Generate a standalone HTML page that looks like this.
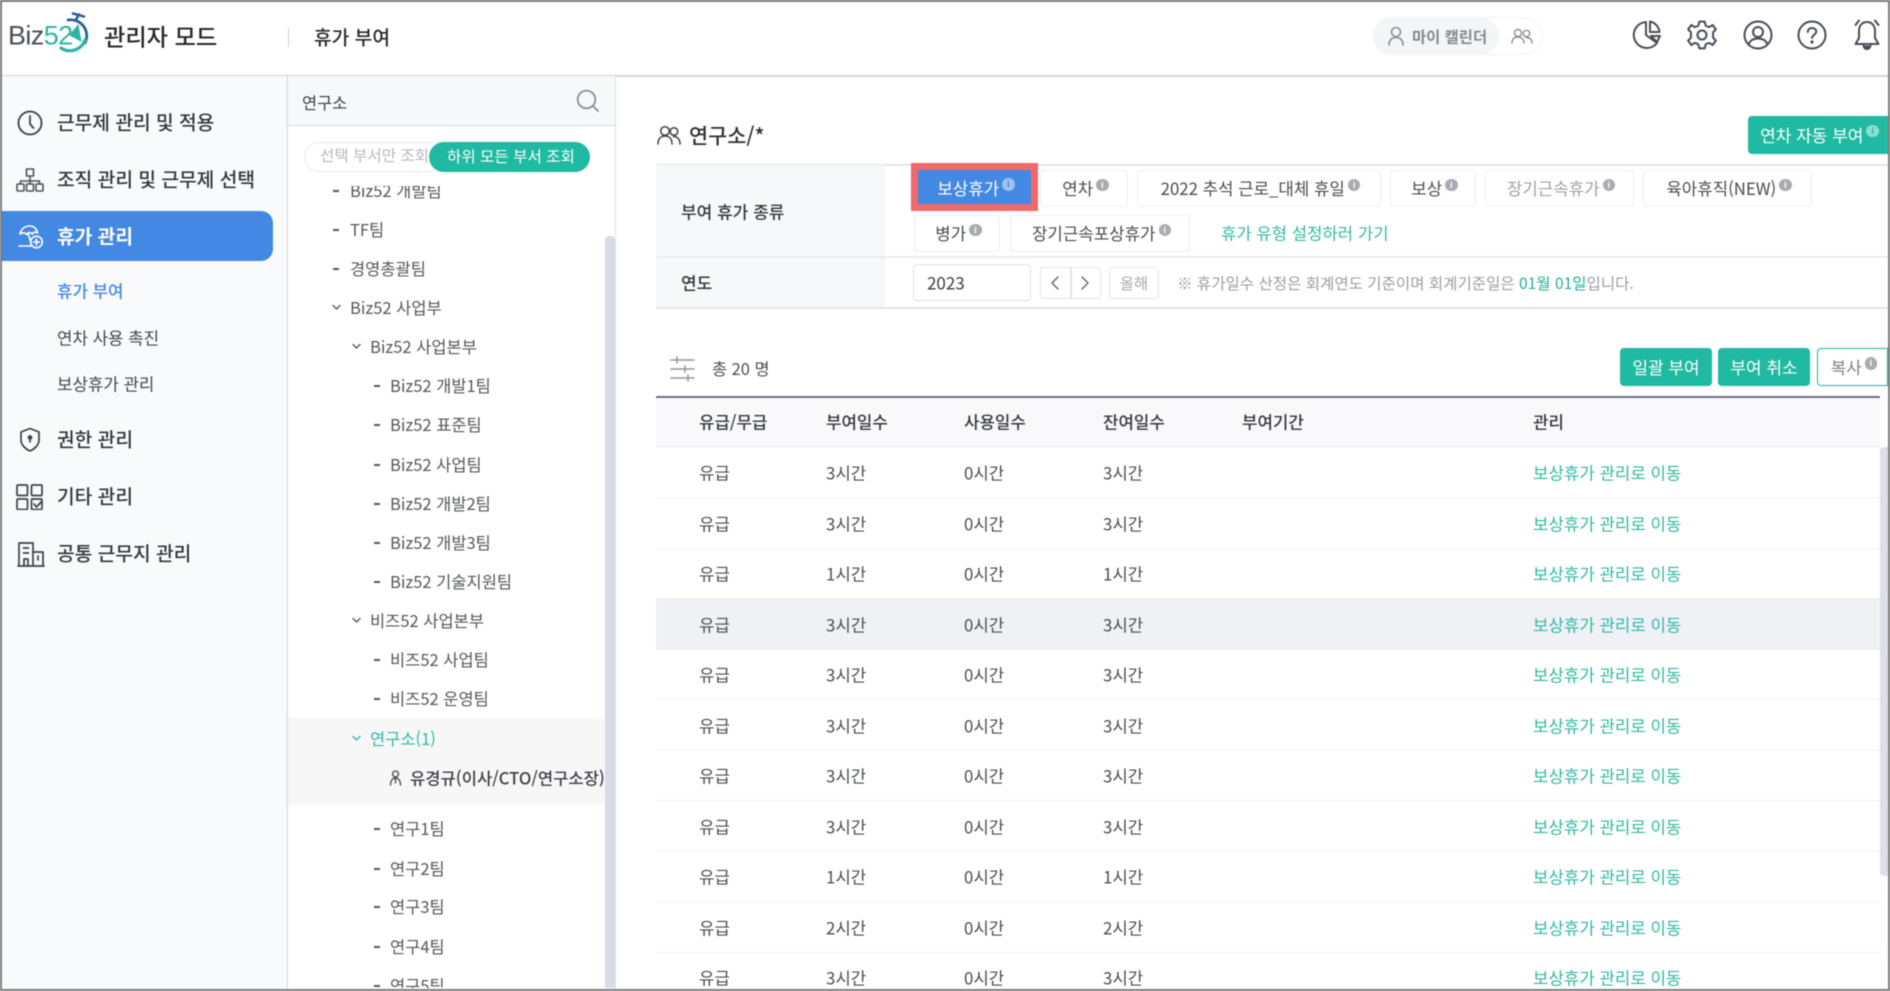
<!DOCTYPE html>
<html lang="ko"><head><meta charset="utf-8"><title>휴가 부여</title>
<style>
html,body{margin:0;padding:0;background:#fff}
body{position:relative;width:1890px;height:991px;overflow:hidden;font-family:"Liberation Sans","Noto Sans CJK KR",sans-serif;color:#3c3e44}
#w{position:absolute;left:0;top:0;width:1890px;height:991px;overflow:hidden;filter:blur(.45px)}
div,span,svg{box-sizing:border-box}
.a{position:absolute}
.t{position:absolute;white-space:nowrap;line-height:1;transform:translateY(-50%);font-family:"Noto Sans CJK KR","Liberation Sans",sans-serif}
.m{font-size:19.2px;font-weight:500;color:#33353a;left:57px}
.s{font-size:16.8px;color:#44464c;left:57px}
.l{font-size:16.5px;color:#55575d}
.d{position:absolute;width:6px;height:1.6px;background:#55575d}
.b{position:absolute;display:flex;align-items:center;justify-content:center;white-space:nowrap;background:#fff;border:1.5px solid #eceef1;border-radius:4px;height:37px;font-size:16.8px;color:#4a4c52;font-family:"Noto Sans CJK KR",sans-serif;padding-bottom:1px}
.g{background:#20b9a1;border:0;color:#fff;border-radius:4px;height:38px;font-size:17px;padding-bottom:2px}
.inf{display:inline-block;width:12.5px;height:12.5px;border-radius:50%;background:#a9abb0;color:#fff;font:bold 9px/12.5px "Liberation Sans",sans-serif;text-align:center;font-style:normal;margin:-6px -3px 0 3px;align-self:center}
.r{position:absolute;left:656px;width:1224px;height:50.5px;border-bottom:1.5px solid #eceef0}
.r span{position:absolute;top:calc(50% + 1px);transform:translateY(-50%);line-height:1;white-space:nowrap;font-size:16.8px;color:#4b4d53;font-family:"Noto Sans CJK KR","Liberation Sans",sans-serif}
.r span:nth-child(1){left:43px}.r span:nth-child(2){left:170px}.r span:nth-child(3){left:308px}.r span:nth-child(4){left:447px}
.r span:nth-child(5){left:877px;color:#2fb9a2}
.h{font-size:16.8px;font-weight:500;color:#33353a;top:422px}
svg{position:absolute;fill:none;stroke-linecap:round;stroke-linejoin:round}
</style></head><body><div id="w">

<!-- header -->
<div class="a" style="left:0;top:75px;width:1890px;height:1.5px;background:#d3d5da"></div>
<span class="t" style="left:8px;top:36px;font:27px/1 'Liberation Sans',sans-serif;letter-spacing:-.6px;color:#4b4d55">Biz<span style="color:#2eb5a5">52</span></span>
<svg style="left:58px;top:10px" width="32" height="46" viewBox="0 0 32 46">
<path d="M10 10A16 16 0 0 1 27 33" stroke="#2b5f9e" stroke-width="2.8"/>
<path d="M27 33A16 16 0 0 1 3 41" stroke="#2eb5a5" stroke-width="3.2" transform="translate(0 -3)"/>
<path d="M21 4.500L18 9.500M15 3.500L26 6.500" stroke="#2b5f9e" stroke-width="2.600"/>
<path d="M20 15L23 31 12 25Z" fill="#2eb5a5" stroke="#2eb5a5" stroke-width="1"/>
</svg>
<span class="t" style="left:104px;top:36px;font-size:23.2px;font-weight:500;color:#26282c">관리자 모드</span>
<div class="a" style="left:288px;top:28px;width:1px;height:19px;background:#cfd1d6"></div>
<span class="t" style="left:314px;top:37px;font-size:19.2px;font-weight:500;color:#26282c">휴가 부여</span>

<div class="a" style="left:1373px;top:17px;width:170px;height:38px;border:1.5px solid #f1f2f4;border-radius:19px"></div>
<div class="a" style="left:1373px;top:17px;width:126px;height:38px;background:#f4f5f7;border-radius:19px"></div>
<svg style="left:1387px;top:26px" width="18" height="20" viewBox="0 0 18 20" stroke="#8b8e95" stroke-width="1.600"><circle cx="9" cy="6" r="4.500"/><path d="M2 19C2 14 5 11.500 9 11.500S16 14 16 19"/></svg>
<span class="t" style="left:1412px;top:37px;font-size:15.400px;font-weight:700;color:#85888f">마이 캘린더</span>
<svg style="left:1511px;top:28px" width="22" height="16" viewBox="0 0 22 16" stroke="#8b8e95" stroke-width="1.400"><circle cx="7" cy="5" r="3.500"/><path d="M1 15C1 11 3.500 9 7 9S13 11 13 15"/><circle cx="15.500" cy="5.500" r="3.200"/><path d="M15 9.500C18.500 9.500 21 11.500 21 15"/></svg>

<svg style="left:1631px;top:19px" width="32" height="32" viewBox="0 0 32 32" stroke="#494c57" stroke-width="2">
<path d="M15 3A13 13 0 1 0 26 24L15 16Z"/><path d="M19 2.500A12 12 0 0 1 28.500 13H19Z"/><path d="M20 17H29L26 23Z"/></svg>
<svg style="left:1686px;top:19px" width="32" height="32" viewBox="0 0 24 24" stroke="#494c57" stroke-width="1.500"><circle cx="12" cy="12" r="3.400"/><path d="M10 2H14L14.800 5.100 17.300 6.100 20 4.500 22.400 7.800 20.300 10 20.300 14 22.400 16.200 20 19.500 17.300 17.900 14.800 18.900 14 22H10L9.200 18.900 6.700 17.900 4 19.500 1.600 16.200 3.700 14 3.700 10 1.600 7.800 4 4.500 6.700 6.100 9.200 5.100Z"/></svg>
<svg style="left:1743px;top:20px" width="30" height="30" viewBox="0 0 30 30" stroke="#494c57" stroke-width="2"><circle cx="15" cy="15" r="13.500"/><circle cx="15" cy="12" r="5"/><path d="M5.500 24.500C7 20.500 10.500 18.500 15 18.500S23 20.500 24.500 24.500"/></svg>
<svg style="left:1797px;top:20px" width="30" height="30" viewBox="0 0 30 30" stroke="#494c57" stroke-width="2"><circle cx="15" cy="15" r="13.500"/><path d="M10.800 12C10.800 9.500 12.600 8 15 8S19.200 9.500 19.200 11.800C19.200 14.500 15 15 15 18"/><circle cx="15" cy="22" r=".6" fill="#494c57"/></svg>
<svg style="left:1852px;top:18px" width="30" height="33" viewBox="0 0 30 33" stroke="#494c57" stroke-width="2"><path d="M15 4C9.500 4 7 8.500 7 13V20L3.500 26H26.500L23 20V13C23 8.500 20.500 4 15 4Z"/><path d="M11.500 27.500C12 30 13.500 31 15 31S18 30 18.500 27.500" fill="#494c57"/><path d="M7 2.500L3.500 7M23 2.500L26.500 7"/></svg>

<!-- sidebar -->
<div class="a" style="left:0;top:76px;width:288px;height:915px;background:#f9fafc;border-right:1.5px solid #d5d7dc"></div>
<div class="a" style="left:2px;top:211px;width:271px;height:50px;background:#4388e2;border-radius:0 12px 12px 0"></div>

<svg style="left:17px;top:110px" width="26" height="26" viewBox="0 0 26 26" stroke="#3f4146" stroke-width="1.800"><circle cx="13" cy="13" r="11.500"/><path d="M13 6V14L16.500 18"/></svg>
<svg style="left:16px;top:168px" width="28" height="24" viewBox="0 0 28 24" stroke="#505257" stroke-width="1.600"><rect x="10.500" y="1" width="7" height="7"/><path d="M14 8V13M4.500 16V13H23.500V16M14 13V16"/><rect x="1" y="16" width="7" height="7" rx="1"/><rect x="10.500" y="16" width="7" height="7" rx="1"/><rect x="20" y="16" width="7" height="7" rx="1"/></svg>
<svg style="left:18px;top:225px" width="26" height="24" viewBox="0 0 26 24" stroke="#fff" stroke-width="1.600"><path d="M2 9C3 3 8 1 12 1S19 4 19.500 8C17 6.500 15.500 7 14.500 9C12 7 10 7 9 9.500 7 7.500 4 7.500 2 9Z"/><path d="M10.500 9.500L13 18M1 21H13"/><circle cx="18.500" cy="17" r="5.800"/><path d="M18.500 14V20M15.500 17H21.500"/></svg>
<svg style="left:19px;top:427px" width="22" height="25" viewBox="0 0 22 25" stroke="#3f4146" stroke-width="1.700"><path d="M11 1.500L20 5V13C20 18 15.500 22 11 24 6.500 22 2 18 2 13V5Z"/><circle cx="11" cy="10.500" r="1.500" fill="#3f4146"/><path d="M11 11V15"/></svg>
<svg style="left:16px;top:484px" width="27" height="26" viewBox="0 0 27 26" stroke="#3f4146" stroke-width="1.700"><rect x="1" y="1" width="10.500" height="10.500" rx="1"/><rect x="15.500" y="1" width="10.500" height="10.500" rx="1"/><rect x="1" y="15" width="10.500" height="10.500" rx="1"/><rect x="15.500" y="15" width="10.500" height="10.500" rx="1"/><path d="M18 20L20.500 23 26 17"/></svg>
<svg style="left:17px;top:541px" width="28" height="26" viewBox="0 0 28 26" stroke="#3f4146" stroke-width="1.700"><path d="M2 25V2H16V25M16 11H26V25M1 25H27"/><path d="M6.500 7H11.500M6.500 12H11.500M7 25V18H11V25M21 15V19"/></svg>

<span class="t m" style="top:122px">근무제 관리 및 적용</span>
<span class="t m" style="top:179px">조직 관리 및 근무제 선택</span>
<span class="t m" style="top:236px;color:#fff;font-weight:700">휴가 관리</span>
<span class="t s" style="top:291px;color:#4388e2;font-weight:500">휴가 부여</span>
<span class="t s" style="top:338px">연차 사용 촉진</span>
<span class="t s" style="top:384px">보상휴가 관리</span>
<span class="t m" style="top:439px">권한 관리</span>
<span class="t m" style="top:496px">기타 관리</span>
<span class="t m" style="top:553px">공통 근무지 관리</span>

<!-- tree panel -->
<div class="a" style="left:288px;top:76px;width:328px;height:915px;background:#fff;border-right:1.500px solid #dfe1e6"></div>
<div class="a" style="left:288px;top:76px;width:327px;height:50px;background:#f7f8fa;border-bottom:1.500px solid #d5d7dc"></div>
<span class="t" style="left:302px;top:102px;font-size:16.400px;color:#3c3e44">연구소</span>
<svg style="left:576px;top:89px" width="24" height="24" viewBox="0 0 24 24" stroke="#85888e" stroke-width="1.700"><circle cx="10.500" cy="10.500" r="8.800"/><path d="M17 17L22 22"/></svg>
<div class="a" style="left:304px;top:142px;width:180px;height:30px;border:1.500px solid #e8eaed;border-radius:15px;background:#fff"></div>
<span class="t" style="left:320px;top:156px;font-size:15.600px;color:#b6b8bd">선택 부서만 조회</span>
<div class="a" style="left:429px;top:142px;width:161px;height:30px;background:#20b9a1;border-radius:15px"></div>
<span class="t" style="left:447px;top:157px;font-size:15.600px;color:#fff">하위 모든 부서 조회</span>

<div class="a" style="left:288px;top:186px;width:317px;height:802px;overflow:hidden">
 <div class="a" style="left:0;top:532px;width:317px;height:87px;background:#f7f7f8"></div>
 <i class="d" style="left:45px;top:4px"></i><span class="t l" style="left:62px;top:4px">Biz52 개발팀</span>
 <i class="d" style="left:45px;top:43px"></i><span class="t l" style="left:62px;top:43px">TF팀</span>
 <i class="d" style="left:45px;top:82px"></i><span class="t l" style="left:62px;top:82px">경영총괄팀</span>
 <svg style="left:44px;top:118px" width="9" height="7" viewBox="0 0 9 7" stroke="#55575d" stroke-width="1.400"><path d="M1 1.500L4.500 5 8 1.500"/></svg><span class="t l" style="left:62px;top:121px">Biz52 사업부</span>
 <svg style="left:64px;top:157px" width="9" height="7" viewBox="0 0 9 7" stroke="#55575d" stroke-width="1.400"><path d="M1 1.500L4.500 5 8 1.500"/></svg><span class="t l" style="left:82px;top:160px">Biz52 사업본부</span>
 <i class="d" style="left:86px;top:199px"></i><span class="t l" style="left:102px;top:199px">Biz52 개발1팀</span>
 <i class="d" style="left:86px;top:238px"></i><span class="t l" style="left:102px;top:238px">Biz52 표준팀</span>
 <i class="d" style="left:86px;top:278px"></i><span class="t l" style="left:102px;top:278px">Biz52 사업팀</span>
 <i class="d" style="left:86px;top:317px"></i><span class="t l" style="left:102px;top:317px">Biz52 개발2팀</span>
 <i class="d" style="left:86px;top:356px"></i><span class="t l" style="left:102px;top:356px">Biz52 개발3팀</span>
 <i class="d" style="left:86px;top:395px"></i><span class="t l" style="left:102px;top:395px">Biz52 기술지원팀</span>
 <svg style="left:64px;top:431px" width="9" height="7" viewBox="0 0 9 7" stroke="#55575d" stroke-width="1.400"><path d="M1 1.500L4.500 5 8 1.500"/></svg><span class="t l" style="left:82px;top:434px">비즈52 사업본부</span>
 <i class="d" style="left:86px;top:473px"></i><span class="t l" style="left:102px;top:473px">비즈52 사업팀</span>
 <i class="d" style="left:86px;top:512px"></i><span class="t l" style="left:102px;top:512px">비즈52 운영팀</span>
 <svg style="left:64px;top:549px" width="9" height="7" viewBox="0 0 9 7" stroke="#2fb9a2" stroke-width="1.400"><path d="M1 1.500L4.500 5 8 1.500"/></svg><span class="t l" style="left:82px;top:552px;color:#2fb9a2">연구소(1)</span>
 <svg style="left:101px;top:584px" width="13" height="16" viewBox="0 0 13 16" stroke="#44464c" stroke-width="1.300"><circle cx="6.500" cy="4" r="3"/><path d="M1.500 15C1.500 10 4 8 6.500 8S11.500 10 11.500 15M6.500 8V13"/></svg>
 <span class="t l" style="left:122px;top:592px;font-weight:500;color:#3c3e44;font-size:16.600px">유경규(이사/CTO/연구소장)</span>
 <i class="d" style="left:86px;top:642px"></i><span class="t l" style="left:102px;top:642px">연구1팀</span>
 <i class="d" style="left:86px;top:682px"></i><span class="t l" style="left:102px;top:682px">연구2팀</span>
 <i class="d" style="left:86px;top:720px"></i><span class="t l" style="left:102px;top:720px">연구3팀</span>
 <i class="d" style="left:86px;top:760px"></i><span class="t l" style="left:102px;top:760px">연구4팀</span>
 <i class="d" style="left:86px;top:799px"></i><span class="t l" style="left:102px;top:799px">연구5팀</span>
</div>
<div class="a" style="left:605px;top:236px;width:10px;height:752px;background:#d7dbe6;border-radius:4px 4px 0 0"></div>

<!-- title -->
<svg style="left:657px;top:125px" width="24" height="20" viewBox="0 0 24 20" stroke="#3f4146" stroke-width="1.500"><circle cx="8" cy="6" r="4.300"/><path d="M1 19C1 14 3.500 11 8 11S15 14 15 19"/><circle cx="17" cy="6.500" r="3.800"/><path d="M16.500 11.500C20.500 11.500 23 14.500 23 19"/></svg>
<span class="t" style="left:689px;top:135px;font-size:20.800px;font-weight:500;color:#2d2f34">연구소/*</span>
<div class="b g" style="left:1748px;top:116px;width:140px;border-radius:4px 0 0 4px">연차 자동 부여<i class="inf" style="background:#8ddccf;color:#20b9a1">i</i></div>

<!-- form -->
<div class="a" style="left:656px;top:164px;width:1232px;height:1.500px;background:#e3e5e8"></div>
<div class="a" style="left:656px;top:165px;width:229px;height:142px;background:#f7f8fa"></div>
<div class="a" style="left:656px;top:256px;width:1232px;height:1.500px;background:#ebecef"></div>
<div class="a" style="left:656px;top:307px;width:1232px;height:1.500px;background:#e3e5e8"></div>
<span class="t" style="left:681px;top:211px;font-size:17px;font-weight:500;color:#33353a">부여 휴가 종류</span>
<span class="t" style="left:681px;top:282px;font-size:17px;font-weight:500;color:#33353a">연도</span>

<div class="a" style="left:911px;top:163px;width:127px;height:48px;background:#f0696c"></div>
<div class="b" style="left:918px;top:170px;width:113px;height:34px;background:#4388e2;border:0;color:#fff;border-radius:0;padding:1px 0 0">보상휴가<i class="inf" style="background:#9cc3ef;color:#4388e2">i</i></div>
<div class="b" style="left:1040px;top:170px;width:88px">연차<i class="inf">i</i></div>
<div class="b" style="left:1137px;top:170px;width:244px">2022 추석 근로_대체 휴일<i class="inf">i</i></div>
<div class="b" style="left:1390px;top:170px;width:86px">보상<i class="inf">i</i></div>
<div class="b" style="left:1485px;top:170px;width:149px;color:#9fa1a6">장기근속휴가<i class="inf">i</i></div>
<div class="b" style="left:1643px;top:170px;width:169px">육아휴직(NEW)<i class="inf">i</i></div>
<div class="b" style="left:914px;top:215px;width:86px">병가<i class="inf">i</i></div>
<div class="b" style="left:1010px;top:215px;width:180px">장기근속포상휴가<i class="inf">i</i></div>
<span class="t" style="left:1221px;top:233px;font-size:16.700px;color:#2fbba3">휴가 유형 설정하러 가기</span>

<div class="a" style="left:913px;top:264px;width:118px;height:37px;border:1.500px solid #dfe1e5;border-radius:4px;background:#fff"></div>
<span class="t" style="left:927px;top:282px;font-size:17px;color:#3c3e44">2023</span>
<div class="a" style="left:1040px;top:267px;width:61px;height:32px;border:1.500px solid #e3e5e8;border-radius:3px"></div>
<div class="a" style="left:1070px;top:267px;width:1.500px;height:32px;background:#e3e5e8"></div>
<svg style="left:1050px;top:275px" width="10" height="16" viewBox="0 0 10 16" stroke="#6a6c72" stroke-width="1.500"><path d="M8 2L2 8 8 14"/></svg>
<svg style="left:1080px;top:275px" width="10" height="16" viewBox="0 0 10 16" stroke="#6a6c72" stroke-width="1.500"><path d="M2 2L8 8 2 14"/></svg>
<div class="b" style="left:1109px;top:267px;width:50px;height:32px;border-color:#e3e5e8;color:#a8aaaf;font-size:15.400px;border-radius:3px">올해</div>
<span class="t" style="left:1177px;top:284px;font-size:15.560px;color:#9b9da3">※ 휴가일수 산정은 회계연도 기준이며 회계기준일은 <span style="color:#23b09a">01월 01일</span>입니다.</span>

<!-- list toolbar -->
<svg style="left:670px;top:356px" width="25" height="26" viewBox="0 0 25 26" stroke="#94969c" stroke-width="1.500"><path d="M1 4H24M1 13H24M1 22H24M7 1V7M15 10V16M18 19V25"/></svg>
<span class="t" style="left:712px;top:368px;font-size:16.400px;color:#4b4d53">총 20 명</span>
<div class="b g" style="left:1620px;top:348px;width:92px">일괄 부여</div>
<div class="b g" style="left:1718px;top:348px;width:92px">부여 취소</div>
<div class="b" style="left:1817px;top:348px;width:71px;height:38px;border:1.800px solid #20b9a1;color:#7c7e84;border-radius:4px 0 0 4px">복사<i class="inf">i</i></div>

<!-- table -->
<div class="a" style="left:656px;top:396px;width:1224px;height:2.500px;background:#6e6f85"></div>
<div class="a" style="left:656px;top:398px;width:1224px;height:49px;background:#f9f9fb;border-bottom:1.500px solid #e8e9ec"></div>
<span class="t h" style="left:699px">유급/무급</span>
<span class="t h" style="left:826px">부여일수</span>
<span class="t h" style="left:964px">사용일수</span>
<span class="t h" style="left:1103px">잔여일수</span>
<span class="t h" style="left:1242px">부여기간</span>
<span class="t h" style="left:1533px">관리</span>

<div class="r" style="top:447.500px"><span>유급</span><span>3시간</span><span>0시간</span><span>3시간</span><span>보상휴가 관리로 이동</span></div>
<div class="r" style="top:498px"><span>유급</span><span>3시간</span><span>0시간</span><span>3시간</span><span>보상휴가 관리로 이동</span></div>
<div class="r" style="top:548.500px"><span>유급</span><span>1시간</span><span>0시간</span><span>1시간</span><span>보상휴가 관리로 이동</span></div>
<div class="r" style="top:599px;background:#f0f1f5"><span>유급</span><span>3시간</span><span>0시간</span><span>3시간</span><span>보상휴가 관리로 이동</span></div>
<div class="r" style="top:649.500px"><span>유급</span><span>3시간</span><span>0시간</span><span>3시간</span><span>보상휴가 관리로 이동</span></div>
<div class="r" style="top:700px"><span>유급</span><span>3시간</span><span>0시간</span><span>3시간</span><span>보상휴가 관리로 이동</span></div>
<div class="r" style="top:750.500px"><span>유급</span><span>3시간</span><span>0시간</span><span>3시간</span><span>보상휴가 관리로 이동</span></div>
<div class="r" style="top:801px"><span>유급</span><span>3시간</span><span>0시간</span><span>3시간</span><span>보상휴가 관리로 이동</span></div>
<div class="r" style="top:851.500px"><span>유급</span><span>1시간</span><span>0시간</span><span>1시간</span><span>보상휴가 관리로 이동</span></div>
<div class="r" style="top:902px"><span>유급</span><span>2시간</span><span>0시간</span><span>2시간</span><span>보상휴가 관리로 이동</span></div>
<div class="r" style="top:952.500px"><span>유급</span><span>3시간</span><span>0시간</span><span>3시간</span><span>보상휴가 관리로 이동</span></div>
<div class="a" style="left:1880px;top:447px;width:8px;height:429px;background:#dde0e6;border-radius:4px 0 0 4px"></div>

<!-- frame -->
<div class="a" style="left:0;top:0;width:1890px;height:2px;background:#7b7b7b"></div>
<div class="a" style="left:0;top:0;width:2px;height:991px;background:#7b7b7b"></div>
<div class="a" style="right:0;top:0;width:2px;height:991px;background:#7b7b7b"></div>
<div class="a" style="left:0;bottom:0;width:1890px;height:2.500px;background:#7b7b7b"></div>
</div></body></html>
